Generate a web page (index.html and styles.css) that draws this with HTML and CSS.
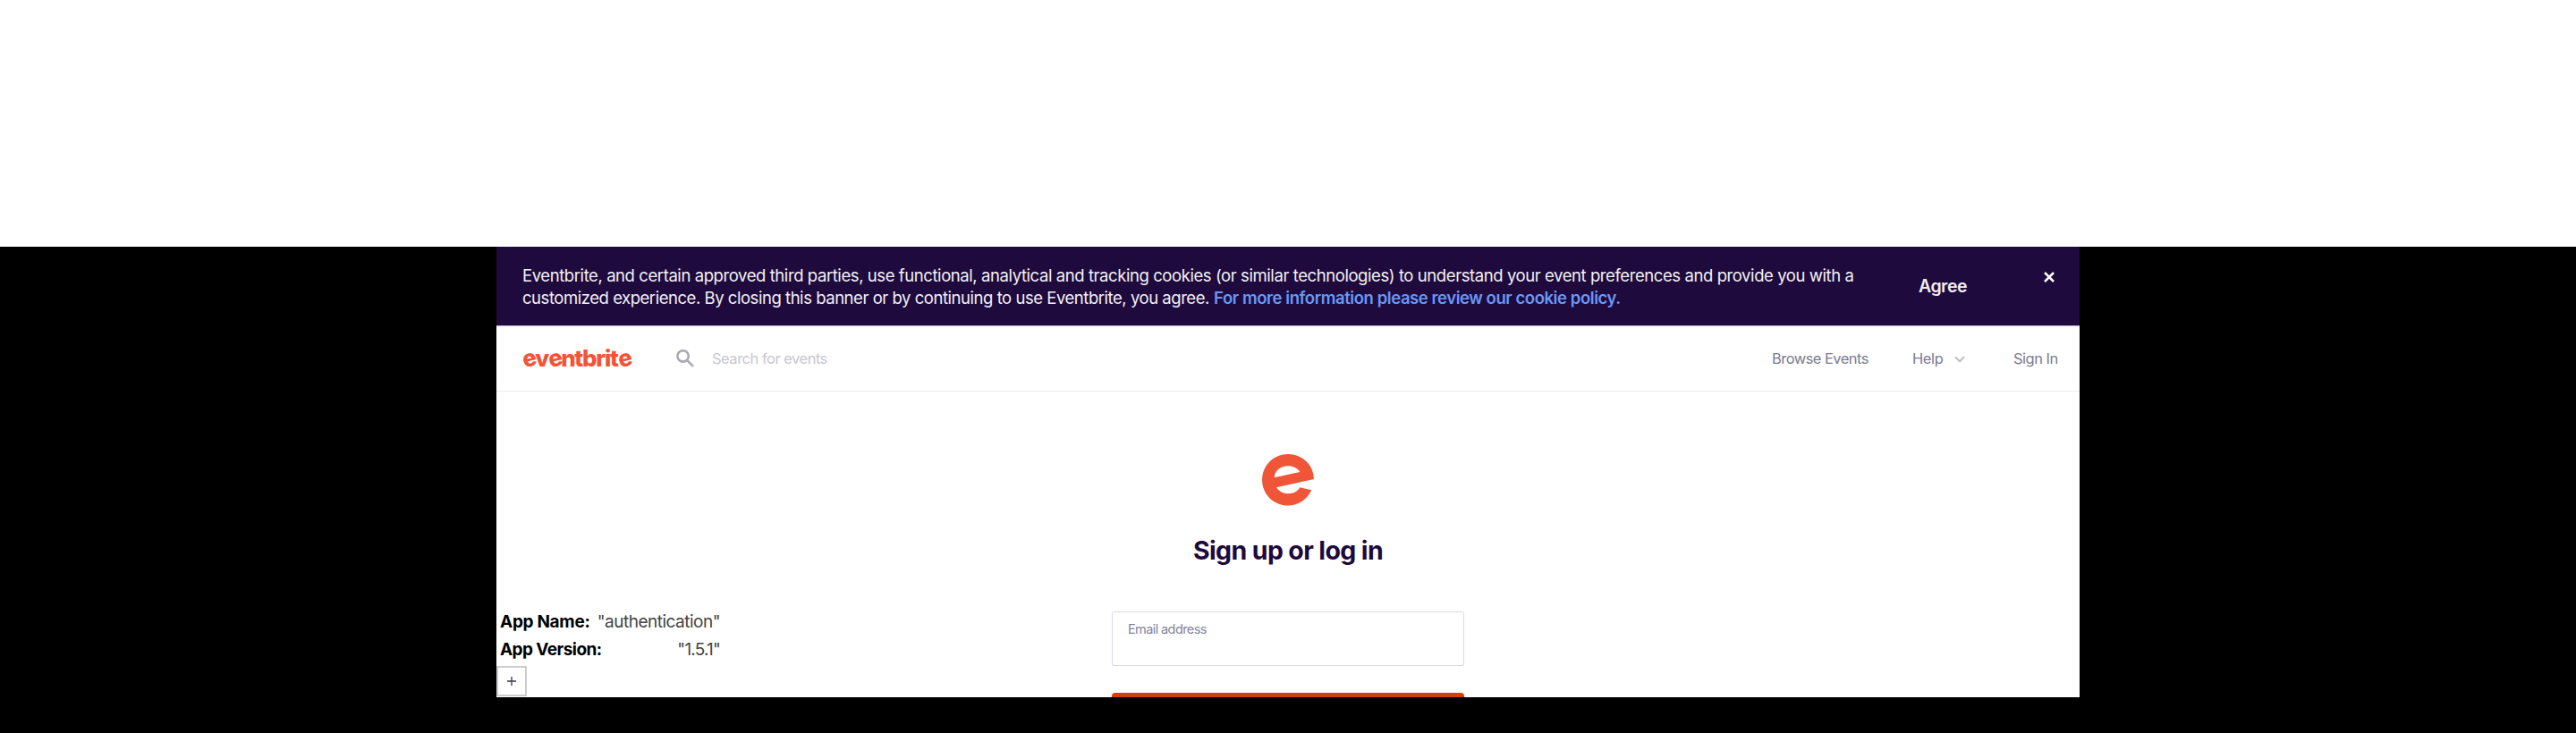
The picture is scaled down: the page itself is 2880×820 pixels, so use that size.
FILE: index.html
```
<!DOCTYPE html>
<html lang="en">
<head>
<meta charset="utf-8">
<title>Sign up or log in | Eventbrite</title>
<link rel="stylesheet" href="styles.css">
</head>
<body>
<div class="stage">
  <div class="page">
    <div class="banner">
      <p class="banner-text"><span class="line-1">Eventbrite, and certain approved third parties, use functional, analytical and tracking cookies (or similar technologies) to understand your event preferences and provide you with a</span><br><span class="line-2">customized experience. By closing this banner or by continuing to use Eventbrite, you agree.</span> <a class="policy">For more information please review our cookie policy.</a></p>
      <span class="agree">Agree</span>
      <svg class="close" viewBox="0 0 12 12"><path d="M1 1l10 10M11 1L1 11"/></svg>
    </div>
    <header class="nav">
      <div class="logo"><span class="tilt">e</span>v<span class="tilt">e</span>ntbrit<span class="tilt">e</span></div>
      <svg class="search-icon" viewBox="0 0 20 20"><circle cx="7.6" cy="7.4" r="6.2"/><path d="M12 11.8l7 7"/></svg>
      <span class="search">Search for events</span>
      <nav class="links">
        <span class="browse">Browse Events</span>
        <span class="help">Help</span>
        <svg class="chevron" viewBox="0 0 12 8"><path d="M1 1.2l5 5 5-5"/></svg>
        <span class="signin">Sign In</span>
      </nav>
    </header>
    <main class="content">
      <section class="auth">
        <svg class="mark" viewBox="0 0 174 173"><path fill-rule="evenodd" d="M174 84L48 112C56 125 71 133 87 133C105 133 119 126 127 112L166 121C152 152 122 173 87 173C38 173 0 134 0 87C0 38 39 0 87 0C136 0 174 38 174 84ZM41 79L127 60C119 47 104 40 87 40C61 40 42 58 41 79Z"/></svg>
        <h1 class="title">Sign up or log in</h1>
        <div class="field"><label class="label">Email address</label></div>
        <div class="submit"></div>
      </section>
      <aside class="debug">
        <div class="row"><b class="app-name">App Name:</b><span class="auth-value">"authentication"</span></div>
        <div class="row"><b class="app-version">App Version:</b><span class="version-value">"1.5.1"</span></div>
        <div class="expand"><svg class="plus" viewBox="0 0 10 10"><path d="M5 0v10M0 5h10"/></svg></div>
      </aside>
    </main>
  </div>
</div>
</body>
</html>
```
FILE: styles.css
```
* { box-sizing: border-box; }
body { margin: 0; background: #fff; font-family: Inter, "Liberation Sans", sans-serif; }
svg { display: block; flex: none; fill: none; }
.stage { height: 820px; border-top: 276px solid #fff; background: #000; }
.page { width: 1770px; height: 504px; margin-left: 555px; background: #fff; overflow: hidden; }

.banner { height: 89px; padding: 20px 28px 0 29px; display: flex; background: #1e0a3c; border-bottom: 1px solid #b9afc9; color: #fff; }
.banner-text { margin: 0; width: 1561px; flex: none; font-size: 18.5px; line-height: 25px; white-space: nowrap; color: #f3f1f5; }
.line-1 { letter-spacing: -0.42px; }
.line-2 { letter-spacing: -0.46px; }
.policy { color: #6898f7; font-weight: 600; letter-spacing: -0.43px; }
.agree { margin-top: 12px; width: 140px; font-size: 19.5px; line-height: 25px; font-weight: 600; letter-spacing: -0.5px; color: #f0edf3; }
.close { width: 12px; height: 12px; margin-top: 8px; stroke: #fff; stroke-width: 2.5; }

.nav { height: 73px; padding: 0 25px 0 29px; display: flex; align-items: center; border-bottom: 1px solid #eaeaed; font-size: 16.5px; line-height: 24px; white-space: nowrap; }
.logo { width: 172px; font-size: 26px; line-height: 30px; font-weight: 800; letter-spacing: -1.35px; color: #f05537; }
.tilt { display: inline-block; transform: rotate(-13deg); }
.search-icon { width: 20px; height: 20px; stroke: #a9a8b3; stroke-width: 2.6; }
.search { margin-left: 20px; letter-spacing: -0.5px; color: #c8c6d0; }
.links { margin-left: auto; display: flex; align-items: center; color: #7b7c92; }
.browse { width: 157px; letter-spacing: -0.55px; }
.help { width: 47px; letter-spacing: -0.4px; }
.chevron { width: 12px; height: 8px; margin: 2px 54px 0 0; stroke: #c1bfc9; stroke-width: 2.2; }
.signin { width: 49px; letter-spacing: -0.5px; }

.content { display: grid; height: 342px; grid-template-columns: 100%; }
.auth, .debug { grid-area: 1 / 1; }
.auth { display: flex; flex-direction: column; align-items: center; padding-top: 70px; }
.mark { width: 58px; height: 57.5px; fill: #f05537; }
.title { margin: 32px 0 0; font-size: 28.5px; line-height: 36px; font-weight: 700; letter-spacing: -0.62px; color: #1e0a3c; }
.field { width: 394px; height: 61px; margin-top: 50.5px; padding: 9px 17px; flex: none; border: 1px solid #dbdae3; border-radius: 2px; }
.label { display: block; font-size: 14.5px; line-height: 20px; letter-spacing: -0.6px; color: #84849a; }
.submit { width: 394px; height: 60px; margin-top: 30px; flex: none; background: #d1410c; border-radius: 4px; }

.debug { width: 250px; padding-top: 242px; font-size: 19px; line-height: 31px; white-space: nowrap; }
.row { display: flex; justify-content: space-between; padding-left: 4px; color: #444; }
.row b { color: #000; }
.app-name { letter-spacing: -0.3px; }
.app-version { letter-spacing: -0.57px; }
.auth-value { letter-spacing: -0.5px; }
.version-value { letter-spacing: -0.8px; }
.expand { width: 34px; height: 34px; margin-top: 3px; display: grid; place-items: center; border: 2px solid #ccc; }
.plus { width: 10px; height: 10px; stroke: #39364f; stroke-width: 1.3; }
```
